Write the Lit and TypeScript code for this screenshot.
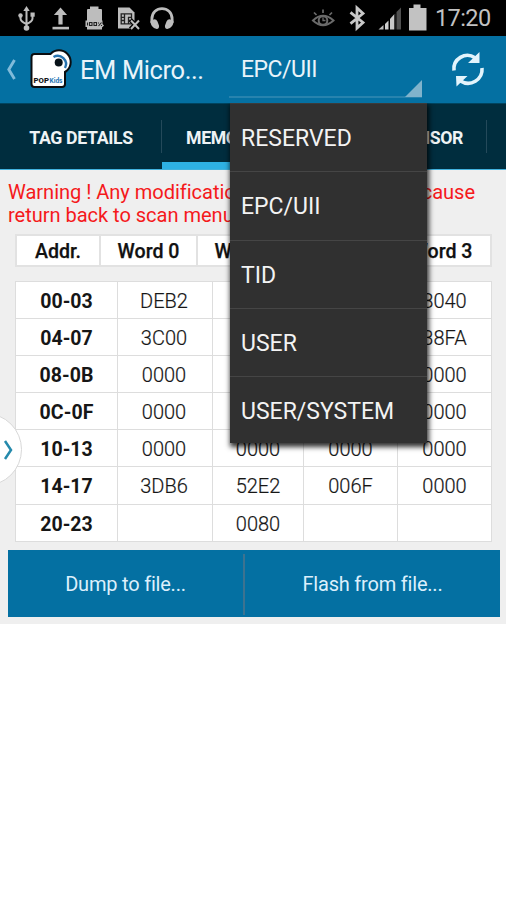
import { LitElement, html, css } from "lit";
import { customElement, property } from "lit/decorators.js";

const MEMORY_ROWS: string[][] = [
  ["00-03", "DEB2", "0000", "0000", "8040"],
  ["04-07", "3C00", "0000", "0000", "38FA"],
  ["08-0B", "0000", "0000", "0000", "0000"],
  ["0C-0F", "0000", "0000", "0000", "0000"],
  ["10-13", "0000", "0000", "0000", "0000"],
  ["14-17", "3DB6", "52E2", "006F", "0000"],
  ["20-23", "", "0080", "", ""],
];

const BANKS = ["RESERVED", "EPC/UII", "TID", "USER", "USER/SYSTEM"];

@customElement("status-bar")
class StatusBar extends LitElement {
  static styles = css`
    :host {
      display: flex;
      height: 36px;
      background: #000;
      color: #c2c2c2;
    }
    svg { display: block; flex: none; }
    .left { margin-left: 12px; }
    .right { margin-left: auto; }
    .clock {
      width: 56px;
      margin-left: 6px;
      margin-right: 15px;
      font-size: 23.5px;
      line-height: 37px;
      letter-spacing: -0.6px;
      white-space: nowrap;
    }
  `;
  render() {
    return html`
      <svg class="left" width="168" height="36" viewBox="12 0 168 36" fill="none" stroke="#bdbdbd" stroke-width="2">
        <path d="M26.500 10V28M20.500 15V18.500Q20.500 21.500 26.500 24M32.500 14.500V18.500Q32.500 21.500 26.500 24" />
        <g fill="#bdbdbd" stroke="none">
          <path d="M26.500 6l3.200 5h-6.400z" />
          <circle cx="26.500" cy="28" r="2.800" />
          <circle cx="20.500" cy="15.500" r="2.200" />
          <rect x="30.500" y="12.500" width="4.200" height="4.200" />
          <path d="M60.500 7.500l6.600 7.500h-4.500v9.500h-4.200V15h-4.500z" />
          <rect x="52.500" y="26.800" width="16.500" height="2.600" />
          <path d="M90 6.500h8.500V9h2.500q1 0 1 1V21H87V10q0-1 1-1h2z" />
          <path d="M85.500 20.500h17v3.500l1.500 1.500-2 2V29.500H87v-2.500h-1.500z" />
          <path d="M118 7.500h11.500l5 5V20l-1.500 8.500H118z" />
        </g>
        <g stroke="#222" stroke-width="1.100">
          <path d="M87.500 22.500v3M89.500 22.500h2.500v3h-2.500zM94 22.500h2.500v3h-2.500zM98.500 22.500v1M101.500 22.500l-3 3.500M101.500 25v1" />
          <path d="M121.200 13.800h10.300v10h-10.300zM124.500 14v10M128.500 17v7M121 17.300h3.500M128 17.300h3.500M121 20.500h3.500M128 20.500h3.500" stroke-width="1.300" />
          <path d="M130.500 20l9 9M139.500 20l-9 9" stroke="#000" stroke-width="4.500" />
        </g>
        <path d="M131 20.500l8 8.500M139 20.500l-8 8.500" stroke-width="2" />
        <path d="M151.800 23V19.500C151.800 5 172.200 5 172.200 19.500V23" stroke-width="2.700" />
        <path d="M150.500 21q5-3.500 7 .5l1.500 4q.5 3-2.300 3.600q-6.200-1.500-6.200-8.100zM173.500 21q-5-3.500-7 .5l-1.500 4q-.5 3 2.300 3.600q6.200-1.500 6.200-8.100z" fill="#bdbdbd" stroke="none" />
      </svg>
      <svg class="right" width="119" height="36" viewBox="310 0 119 36" fill="none">
        <g stroke="#6a6a6a" stroke-width="2">
          <path d="M313 20.500Q323 11 333.500 20.500Q323 30 313 20.500z" />
          <circle cx="323" cy="20.500" r="4.300" />
          <path d="M323 17.500v3h2.500" stroke-width="1.300" />
          <path d="M314 12.500l2.500 2.500M323 9.500v3.500M332 12.500l-2.500 2.500" stroke-width="1.700" />
        </g>
        <path d="M350.500 12.300l12.500 10.200-6 5.500V8l6 5.500-12.500 10.200" stroke="#c8c8c8" stroke-width="2.800" />
        <path d="M378.500 29.500l5-4.500v4.500z" fill="#bdbdbd" />
        <path d="M385 24l3.500-3.500v9H385z" fill="#d0d0d0" />
        <path d="M390 19l4-4.500v15h-4z" fill="#c8c8c8" />
        <path d="M395.300 13.500v16h-1v-15z" fill="#555" />
        <path d="M396.500 12l4.500-4.500v22h-4.500z" fill="#505050" />
        <path d="M413.500 4.500h7V8h6v22.500H409V8h4.500z" fill="#c2c2c2" />
      </svg>
      <span class="clock">17:20</span>
    `;
  }
}

@customElement("action-bar")
class ActionBar extends LitElement {
  static styles = css`
    :host {
      display: flex;
      height: 67px;
      background: #0470a2;
      color: #e9f4fa;
    }
    svg { display: block; flex: none; }
    .title {
      width: 149px;
      margin-left: 6px;
      font-size: 25.5px;
      line-height: 69px;
      white-space: nowrap;
      letter-spacing: -0.4px;
    }
    .spinner {
      width: 193px;
      height: 62px;
      box-sizing: border-box;
      padding-left: 12px;
      border-bottom: 2px solid #2783ae;
      font-size: 23px;
      line-height: 68px;
      letter-spacing: -0.5px;
      display: flex;
      justify-content: space-between;
      align-items: flex-end;
    }
    .spinner span { align-self: flex-start; }
    .corner { margin-bottom: -1px; }
    .refresh { margin-left: auto; }
  `;
  render() {
    return html`
      <svg width="74" height="67" viewBox="0 36 74 67">
        <path d="M14.500 60L8.800 69.500L14.500 79" fill="none" stroke="#80bbda" stroke-width="2.900" />
        <g fill="#fff" stroke="#0a0d10" stroke-width="4">
          <rect x="32.500" y="55" width="31.500" height="31" rx="2" />
          <circle cx="59" cy="62" r="10.700" />
        </g>
        <g fill="#fff">
          <rect x="32.500" y="55" width="31.500" height="31" rx="2" />
          <circle cx="59" cy="62" r="10.700" />
        </g>
        <circle cx="58.700" cy="62.500" r="4" fill="#071218" />
        <path d="M53.500 57A8.300 8.300 0 0 1 65 68" fill="none" stroke="#2673b0" stroke-width="2.400" />
        <text x="33.500" y="83.300" font-family="Roboto, sans-serif" font-size="8" font-weight="900" fill="#16191b" textLength="15.500" lengthAdjust="spacingAndGlyphs">POP</text>
        <text x="49.500" y="83.300" font-family="Roboto, sans-serif" font-size="8" font-weight="700" fill="#2475b5" textLength="13" lengthAdjust="spacingAndGlyphs">Kids</text>
      </svg>
      <span class="title">EM Micro...</span>
      <div class="spinner">
        <span>EPC/UII</span>
        <svg class="corner" width="17" height="18"><path d="M17 1V18H0z" fill="#80b3cc" /></svg>
      </div>
      <svg class="refresh" width="60" height="67" viewBox="446 36 60 67">
        <g fill="none" stroke="#e3f4fc" stroke-width="3.600">
          <path d="M454 70.500A13.500 13.500 0 0 1 475 57.800" />
          <path d="M482 68A14 14 0 0 1 460.500 81" />
        </g>
        <path d="M479.500 52V63H468zM456 76H467.500L456.500 86.500z" fill="#e3f4fc" />
      </svg>
    `;
  }
}

@customElement("tab-strip")
class TabStrip extends LitElement {
  static styles = css`
    :host {
      display: grid;
      grid-template-columns: 162px 163px 162px 1fr;
      height: 67px;
      box-sizing: border-box;
      background: #002d3e;
      border-top: 1px solid #01445f;
      border-bottom: 1px solid #43b3df;
      color: #eef3f5;
      font-size: 17.7px;
      font-weight: 700;
      letter-spacing: -0.35px;
      line-height: 68px;
      overflow: hidden;
    }
    .tab {
      box-sizing: border-box;
      height: 65px;
      white-space: nowrap;
      text-align: center;
      background: linear-gradient(#24495a, #24495a) right 16px / 1px 33px no-repeat;
    }
    .tab.active { border-bottom: 7px solid #2eb1e4; padding-left: 24px; text-align: left; }
    .tab.sensor { text-align: right; padding-right: 24px; }
  `;
  render() {
    return html`
      <div class="tab">TAG DETAILS</div>
      <div class="tab active">MEMORY</div>
      <div class="tab sensor">SENSOR</div>
      <div></div>
    `;
  }
}

@customElement("memory-table")
class MemoryTable extends LitElement {
  @property({ attribute: false }) rows: string[][] = [];
  static styles = css`
    :host { display: block; color: #161616; }
    .head {
      display: grid;
      grid-template-columns: 82px 95px 95px 96px 97px;
      grid-template-rows: 29px;
      gap: 2px;
      width: 477px;
      height: 33px;
      box-sizing: border-box;
      border: 2px solid #e2e2e2;
      background: #e2e2e2;
      font-size: 19.6px;
      font-weight: 500;
      line-height: 31px;
      text-align: center;
      color: #111;
    }
    .head span { background: #fff; white-space: nowrap; -webkit-text-stroke: 0.25px #111; }
    .body {
      margin-top: 14px;
      width: 477px;
      box-sizing: border-box;
      border-top: 1px solid #ddd;
      border-left: 1px solid #ddd;
      background: #fff;
      display: grid;
      grid-template-columns: 102px 95px 91px 94px 94px;
      grid-auto-rows: 37.1px;
    }
    .body span {
      box-sizing: border-box;
      border-right: 1px solid #ddd;
      border-bottom: 1px solid #ddd;
      text-align: center;
      font-size: 20px;
      font-weight: 300;
      line-height: 39px;
      -webkit-text-stroke: 0.2px #161616;
    }
    .body .addr { font-weight: 700; letter-spacing: 0.05px; font-size: 19.5px; -webkit-text-stroke: 0; }
    .body .word0 { padding-right: 2px; }
  `;
  render() {
    return html`
      <div class="head">
        ${["Addr.", "Word 0", "Word 1", "Word 2", "Word 3"].map((h) => html`<span>${h}</span>`)}
      </div>
      <div class="body">
        ${this.rows.map((r) =>
          r.map((c, i) => html`<span class=${i === 0 ? "addr" : i === 1 ? "word0" : ""}>${c}</span>`)
        )}
      </div>
    `;
  }
}

@customElement("app-root")
class AppRoot extends LitElement {
  static styles = css`
    :host {
      display: block;
      position: relative;
      width: 506px;
      height: 900px;
      overflow: hidden;
      background: #fff;
      font-family: Roboto, "Liberation Sans", sans-serif;
    }
    .content {
      height: 454px;
      box-sizing: border-box;
      background: #efefef;
      padding: 11px 0 0 8px;
    }
    .warning {
      color: #f5191b;
      font-size: 20.1px;
      line-height: 23px;
      height: 53px;
      white-space: nowrap;
      letter-spacing: -0.05px;
    }
    .line { display: flex; justify-content: space-between; width: 467px; }
    memory-table { margin-left: 7px; }
    .buttons {
      display: grid;
      grid-template-columns: 235px 2px 1fr;
      width: 492px;
      height: 67px;
      margin-top: 8px;
      background: #0470a2;
      color: #dceffc;
      font-size: 20px;
      line-height: 69px;
      letter-spacing: -0.2px;
      text-align: center;
    }
    .rule { background: #3d7390; margin: 4px 0; }
    .menu {
      position: absolute;
      left: 230px;
      top: 103px;
      width: 197px;
      height: 340px;
      box-sizing: border-box;
      display: grid;
      grid-auto-rows: 68.3px;
      background: #303030;
      border-top: 1px solid #3b3b3b;
      box-shadow: 1px 3px 5px 1px rgba(0, 0, 0, 0.8);
      clip-path: inset(0 -10px -12px -10px);
      color: #f3f3f3;
      font-size: 23px;
    }
    .item {
      box-sizing: border-box;
      padding-left: 11px;
      line-height: 70px;
      border-bottom: 1px solid #454545;
    }
    .item:last-child { border-bottom: 0; }
    .handle {
      position: absolute;
      left: -51px;
      top: 413px;
      width: 73px;
      height: 73px;
      box-sizing: border-box;
      border-radius: 50%;
      border: 1px solid #d8d8d8;
      background: #fff;
    }
    .handle svg { position: absolute; right: 6px; top: 25px; }
  `;
  render() {
    return html`
      <status-bar></status-bar>
      <action-bar></action-bar>
      <tab-strip></tab-strip>
      <main class="content">
        <div class="warning">
          <div class="line"><span>Warning ! Any modification</span><span>cause</span></div>
          <div>return back to scan menu</div>
        </div>
        <memory-table .rows=${MEMORY_ROWS}></memory-table>
        <div class="buttons">
          <span>Dump to file...</span><span class="rule"></span><span>Flash from file...</span>
        </div>
      </main>
      <div class="handle">
        <svg width="12" height="22" viewBox="0 0 12 22">
          <path d="M2 2L8 11L2 20" fill="none" stroke="#258aac" stroke-width="2.500" />
        </svg>
      </div>
      <div class="menu">${BANKS.map((b) => html`<div class="item">${b}</div>`)}</div>
    `;
  }
}
